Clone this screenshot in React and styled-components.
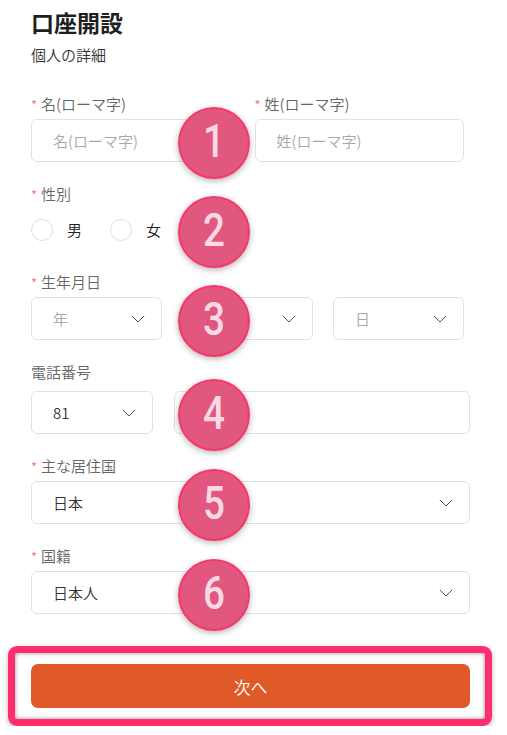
import React from "react";
import styled, { createGlobalStyle } from "styled-components";

const Global = createGlobalStyle`
  html, body { margin: 0; padding: 0; background: #fff; }
  body { font-family: "Noto Sans CJK JP", "Noto Sans", sans-serif; color: #333; font-weight: 350; }
  * { box-sizing: border-box; }
`;

const Page = styled.div`
  width: 507px;
  padding: 7px 37px 0 31px;
`;

const Title = styled.h1`
  margin: 0;
  font-size: 23px;
  line-height: 30px;
  font-weight: 700;
  color: #1f1f1f;
`;

const Subtitle = styled.div`
  margin-top: 7px;
  font-size: 15px;
  line-height: 22px;
  color: #333;
`;

const FormList = styled.div`
  margin-top: 27px;
  display: flex;
  flex-direction: column;
  gap: 21px;
`;

const Item = styled.div`
  display: flex;
  flex-direction: column;
  gap: ${(p) => p.$gap || 4}px;
`;

const Label = styled.div`
  display: flex;
  align-items: flex-start;
  font-size: 15px;
  line-height: 22px;
  color: #666;
`;

const Star = styled.span`
  color: #f56c6c;
  font-size: 13px;
  line-height: 14px;
  margin: 5px 4px 0 0;
`;

const ControlRow = styled.div`
  position: relative;
  display: grid;
  grid-template-columns: ${(p) => p.$cols || "1fr"};
  column-gap: ${(p) => p.$gap || 0}px;
  padding-right: ${(p) => p.$pr || 0}px;
  height: ${(p) => p.$h || 43}px;
  align-items: center;
`;

const Field = styled.div`
  height: 43px;
  border: 1px solid #e2e2e2;
  border-radius: 6px;
  display: flex;
  align-items: center;
  justify-content: space-between;
  padding: 0 16px 0 21px;
  font-size: 15px;
  color: ${(p) => (p.$placeholder ? "#a8a8a8" : "#333")};
  background: #fff;
`;

const RadioGroup = styled.div`
  display: flex;
  align-items: center;
`;

const RadioItem = styled.label`
  display: flex;
  align-items: center;
  gap: 14px;
  margin-right: 28px;
  font-size: 15px;
  color: #222;
`;

const RadioCircle = styled.span`
  width: 22px;
  height: 22px;
  border-radius: 50%;
  border: 1px solid #dcdfe6;
  background: #fff;
`;

const Badge = styled.div`
  position: absolute;
  left: 147px;
  top: calc(50% - 34px);
  width: 72px;
  height: 72px;
  border-radius: 50%;
  background: rgba(224, 74, 116, 0.93);
  border: 2px solid #f5386c;
  box-shadow: 0 2px 6px rgba(0, 0, 0, 0.3);
  display: flex;
  align-items: center;
  justify-content: center;
  color: #f8d9e4;
  font-family: Roboto, "Liberation Sans", sans-serif;
  font-weight: 500;
  font-size: 46px;
  line-height: 1;
  z-index: 2;
  span {
    display: inline-block;
    transform: scaleX(0.84);
    margin-top: -4px;
  }
`;

const Highlight = styled.div`
  margin: 32px -22px 0 -23px;
  border: 7px solid #ff2c6e;
  border-radius: 9px;
  padding: 11px 15px 11px 16px;
  box-shadow: 0 2px 5px rgba(0, 0, 0, 0.3), inset 0 0 4px rgba(0, 0, 0, 0.45);
`;

const NextButton = styled.button`
  width: 100%;
  height: 44px;
  border: none;
  border-radius: 7px;
  background: #e05a27;
  color: #fff;
  font-family: "Noto Sans CJK JP", sans-serif;
  font-weight: 350;
  font-size: 17px;
  cursor: pointer;
`;

const Chevron = () => (
  <svg width="14" height="8" viewBox="0 0 14 8" fill="none">
    <polyline points="0.8,0.8 7,7 13.2,0.8" stroke="#555" strokeWidth="1" />
  </svg>
);

const Select = ({ children, placeholder }) => (
  <Field $placeholder={placeholder}>
    <span>{children}</span>
    <Chevron />
  </Field>
);

const Num = ({ n }) => (
  <Badge>
    <span>{n}</span>
  </Badge>
);

export default function App() {
  return (
    <>
      <Global />
      <Page>
        <Title>口座開設</Title>
        <Subtitle>個人の詳細</Subtitle>
        <FormList>
          <Item>
            <ControlRow $cols="1fr 1fr" $gap={14} $pr={6} $h={22}>
              <Label>
                <Star>*</Star>名(ローマ字)
              </Label>
              <Label>
                <Star>*</Star>姓(ローマ字)
              </Label>
            </ControlRow>
            <ControlRow $cols="1fr 1fr" $gap={14} $pr={6}>
              <Field $placeholder>名(ローマ字)</Field>
              <Field $placeholder>姓(ローマ字)</Field>
              <Num n="1" />
            </ControlRow>
          </Item>

          <Item>
            <Label>
              <Star>*</Star>性別
            </Label>
            <ControlRow $h={41}>
              <RadioGroup>
                <RadioItem>
                  <RadioCircle />男
                </RadioItem>
                <RadioItem>
                  <RadioCircle />女
                </RadioItem>
              </RadioGroup>
              <Num n="2" />
            </ControlRow>
          </Item>

          <Item>
            <Label>
              <Star>*</Star>生年月日
            </Label>
            <ControlRow $cols="1fr 1fr 1fr" $gap={20} $pr={6}>
              <Select placeholder>年</Select>
              <Select placeholder>月</Select>
              <Select placeholder>日</Select>
              <Num n="3" />
            </ControlRow>
          </Item>

          <Item $gap={8}>
            <Label>電話番号</Label>
            <ControlRow $cols="122px 1fr" $gap={21}>
              <Select>81</Select>
              <Field />
              <Num n="4" />
            </ControlRow>
          </Item>

          <Item>
            <Label>
              <Star>*</Star>主な居住国
            </Label>
            <ControlRow>
              <Select>日本</Select>
              <Num n="5" />
            </ControlRow>
          </Item>

          <Item>
            <Label>
              <Star>*</Star>国籍
            </Label>
            <ControlRow>
              <Select>日本人</Select>
              <Num n="6" />
            </ControlRow>
          </Item>
        </FormList>
        <Highlight>
          <NextButton>次へ</NextButton>
        </Highlight>
      </Page>
    </>
  );
}
